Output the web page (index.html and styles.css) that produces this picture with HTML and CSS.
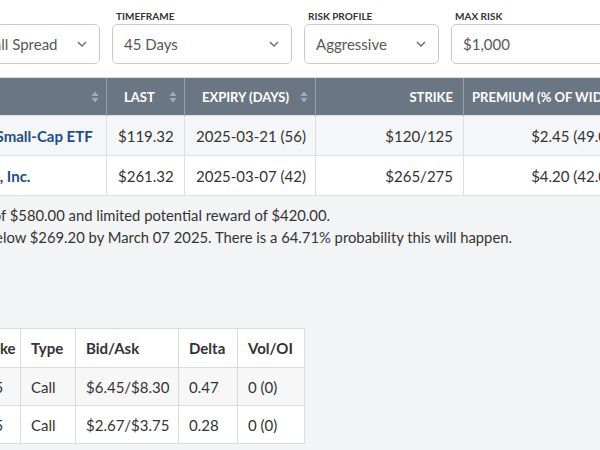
FILE: index.html
```html
<!DOCTYPE html>
<html lang="en">
<head>
<meta charset="utf-8">
<title>Spread Finder</title>
<link rel="stylesheet" href="styles.css">
</head>
<body>
<div class="page">
  <section class="top">
    <div class="filters">
      <div class="field f-symbol">
        <div class="label">Symbol</div>
        <div class="select"><span>All Symbols</span><svg class="chev" width="10" height="6" viewBox="0 0 10 6"><path d="M1 1l4 4 4-4" fill="none" stroke="#6a6a6a" stroke-width="1.4"/></svg></div>
      </div>
      <div class="field f-strategy">
        <div class="label">Strategy</div>
        <div class="select"><span>Bull Call Spread</span><svg class="chev" width="10" height="6" viewBox="0 0 10 6"><path d="M1 1l4 4 4-4" fill="none" stroke="#6a6a6a" stroke-width="1.4"/></svg></div>
      </div>
      <div class="field f-time">
        <div class="label">Timeframe</div>
        <div class="select"><span>45 Days</span><svg class="chev" width="10" height="6" viewBox="0 0 10 6"><path d="M1 1l4 4 4-4" fill="none" stroke="#6a6a6a" stroke-width="1.4"/></svg></div>
      </div>
      <div class="field f-risk">
        <div class="label">Risk Profile</div>
        <div class="select"><span>Aggressive</span><svg class="chev" width="10" height="6" viewBox="0 0 10 6"><path d="M1 1l4 4 4-4" fill="none" stroke="#6a6a6a" stroke-width="1.4"/></svg></div>
      </div>
      <div class="field f-max">
        <div class="label">Max Risk</div>
        <div class="select"><span>$1,000</span></div>
      </div>
    </div>

    <table class="results">
      <colgroup>
        <col class="c-sym"><col class="c-name"><col class="c-last"><col class="c-exp"><col class="c-strike"><col class="c-prem"><col class="c-profit"><col class="c-prob">
      </colgroup>
      <thead>
        <tr>
          <th><div class="th-in"><span>Symbol</span><svg class="sort" width="8" height="12" viewBox="0 0 8 12"><path d="M4 0.5L7.5 5H0.5z M4 11.5L0.5 7h7z" fill="#a3acb7"/></svg></div></th>
          <th><div class="th-in"><span>Name</span><svg class="sort" width="8" height="12" viewBox="0 0 8 12"><path d="M4 0.5L7.5 5H0.5z M4 11.5L0.5 7h7z" fill="#a3acb7"/></svg></div></th>
          <th><div class="th-in"><span>Last</span><svg class="sort" width="8" height="12" viewBox="0 0 8 12"><path d="M4 0.5L7.5 5H0.5z M4 11.5L0.5 7h7z" fill="#a3acb7"/></svg></div></th>
          <th><div class="th-in"><span>Expiry (Days)</span><svg class="sort" width="8" height="12" viewBox="0 0 8 12"><path d="M4 0.5L7.5 5H0.5z M4 11.5L0.5 7h7z" fill="#a3acb7"/></svg></div></th>
          <th class="right">Strike</th>
          <th class="right">Premium (% of Width)</th>
          <th class="right">Max Profit</th>
          <th class="right">Prob.</th>
        </tr>
      </thead>
      <tbody>
        <tr class="odd">
          <td><a class="link" href="#">IJR</a></td>
          <td><a class="link" href="#">iShares Core S&amp;P Small-Cap ETF</a></td>
          <td>$119.32</td>
          <td>2025-03-21 (56)</td>
          <td class="right">$120/125</td>
          <td class="right">$2.45 (49.0%)</td>
          <td class="right">$255.00</td>
          <td class="right">46.12%</td>
        </tr>
        <tr>
          <td><a class="link" href="#">LOW</a></td>
          <td><a class="link" href="#">Lowe's Companies, Inc.</a></td>
          <td>$261.32</td>
          <td>2025-03-07 (42)</td>
          <td class="right">$265/275</td>
          <td class="right">$4.20 (42.0%)</td>
          <td class="right">$420.00</td>
          <td class="right">35.29%</td>
        </tr>
      </tbody>
    </table>
  </section>

  <section class="details">
    <div class="summaries">
      <p class="summary">This position has a limited potential risk of $580.00 and limited potential reward of $420.00.</p>
      <p class="summary">The trade will lose money if LOW ends below $269.20 by March 07 2025. There is a 64.71% probability this will happen.</p>
    </div>

    <table class="legs">
      <colgroup>
        <col class="l-action"><col class="l-exp"><col class="l-strike"><col class="l-type"><col class="l-bidask"><col class="l-delta"><col class="l-vol">
      </colgroup>
      <thead>
        <tr><th>Action</th><th>Expiration</th><th>Strike</th><th>Type</th><th>Bid/Ask</th><th>Delta</th><th>Vol/OI</th></tr>
      </thead>
      <tbody>
        <tr class="odd"><td>Buy</td><td>2025-03-07</td><td>265</td><td>Call</td><td>$6.45/$8.30</td><td>0.47</td><td>0 (0)</td></tr>
        <tr><td>Sell</td><td>2025-03-07</td><td>275</td><td>Call</td><td>$2.67/$3.75</td><td>0.28</td><td>0 (0)</td></tr>
      </tbody>
    </table>
  </section>
</div>
</body>
</html>
```
FILE: styles.css
```css
html, body {
  margin: 0;
  padding: 0;
  overflow: hidden;
  background: #f3f4f6;
}

body {
  font-family: Lato, "Open Sans", Arial, sans-serif;
  color: #333;
}

.page {
  margin-left: -300px;
  width: 1300px;
}

.top {
  background: #fff;
  padding: 10px 20px 0;
}

.filters {
  display: flex;
  gap: 12px;
  margin-bottom: 13px;
}

.field {
  display: flex;
  flex-direction: column;
}

.f-symbol { width: 211px; }
.f-strategy { width: 157px; }
.f-time { width: 180px; }
.f-risk { width: 135px; }
.f-max { width: 200px; }

.label {
  font-size: 10px;
  line-height: 13px;
  font-weight: 700;
  text-transform: uppercase;
  color: #333;
  margin: 0 0 1px 4px;
}

.select {
  box-sizing: border-box;
  height: 40px;
  border: 1px solid #cacaca;
  border-radius: 5px;
  padding: 0 11px 0 11px;
  display: flex;
  align-items: center;
  justify-content: space-between;
  font-size: 15px;
  color: #585858;
  background: #fff;
  white-space: nowrap;
}

.chev {
  flex: none;
  margin-right: 1px;
}

/* results table */
.results {
  border-collapse: collapse;
  table-layout: fixed;
  width: 1133px;
  font-size: 15px;
}

.c-sym { width: 145px; }
.c-name { width: 241px; }
.c-last { width: 78px; }
.c-exp { width: 131px; }
.c-strike { width: 148px; }
.c-prem { width: 170px; }
.c-profit { width: 120px; }
.c-prob { width: 100px; }

.results th {
  background: #6b7684;
  color: #fff;
  font-size: 13px;
  font-weight: 700;
  text-transform: uppercase;
  text-align: left;
  height: 38px;
  padding: 0 10px 0 17px;
  border-left: 1px solid #95a0ab;
  border-top: 1px solid #d9dde2;
  white-space: nowrap;
  overflow: hidden;
  box-sizing: border-box;
}

.results th:first-child { border-left: none; }

.results th.right {
  text-align: right;
  padding: 0 10px 0 8px;
}

.results th:nth-child(6) {
  text-align: left;
}

.th-in {
  display: flex;
  align-items: center;
  justify-content: space-between;
}

.sort { flex: none; margin-right: -3px; }

.results td {
  height: 40px;
  box-sizing: border-box;
  padding: 0 10px 0 11px;
  border: 1px solid #dcdfe3;
  white-space: nowrap;
  color: #333;
}

.results tr.odd td { background: #f5f6f8; }
.results tbody tr:not(.odd) td { background: #fff; }

.right { text-align: right; }

.link {
  color: #1f4d89;
  font-weight: 700;
  text-decoration: none;
}

/* details */
.details {
  padding: 8px 20px 20px;
}

.summaries {
  padding-left: 13px;
}

.summary {
  margin: 0;
  font-size: 14.8px;
  line-height: 22px;
  color: #333;
  white-space: nowrap;
}

.legs {
  margin-top: 80px;
  border-collapse: collapse;
  table-layout: fixed;
  width: 584px;
  font-size: 15px;
  background: #fff;
}

.l-action { width: 90px; }
.l-exp { width: 156px; }
.l-strike { width: 54px; }
.l-type { width: 55px; }
.l-bidask { width: 103px; }
.l-delta { width: 59px; }
.l-vol { width: 67px; }

.legs th, .legs td {
  border: 1px solid #d9dcdf;
  text-align: left;
  padding: 0 10px;
  white-space: nowrap;
  box-sizing: border-box;
}

.legs th {
  height: 39px;
  font-weight: 700;
  color: #333;
}

.legs td {
  height: 38px;
  color: #333;
}

.legs tr.odd td { background: #f7f7f8; }
```
